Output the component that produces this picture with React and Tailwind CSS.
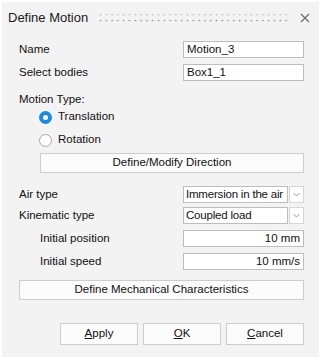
import React from 'react';

const font = { fontFamily: '"Liberation Sans", Arial, sans-serif' };

const Field = ({ value, right }) => (
  <div
    className={`w-[121px] h-[17px] border border-[#bdbdbd] bg-white text-[11.5px] leading-[15px] px-[3px] text-[#111] ${
      right ? 'text-right' : 'text-left'
    }`}
  >
    {value}
  </div>
);

const Select = ({ value }) => (
  <div className="flex w-[121px] h-[17px] gap-[1px]">
    <div className="flex-1 border border-[#bdbdbd] bg-white text-[11.5px] leading-[15px] pl-[2px] tracking-[-0.2px] text-[#111] whitespace-nowrap overflow-hidden">
      {value}
    </div>
    <div className="w-[15px] shrink-0 border border-[#d6d6d6] bg-white flex items-center justify-center">
      <svg width="7" height="5" viewBox="0 0 7 5">
        <path d="M0.5 1 L3.5 4 L6.5 1" fill="none" stroke="#9a9a9a" strokeWidth="1" />
      </svg>
    </div>
  </div>
);

const Row = ({ label, indent, children, className = '' }) => (
  <div className={`flex items-center justify-between ${className}`}>
    <span className={`text-[11.5px] text-[#111] whitespace-nowrap ${indent ? 'pl-[21px]' : ''}`}>{label}</span>
    {children}
  </div>
);

const Radio = ({ checked, label }) => (
  <div className="flex items-center h-[23px] pl-[20px] gap-[6px]">
    {checked ? (
      <span className="w-[13px] h-[13px] rounded-full bg-[#1b8be0] flex items-center justify-center">
        <span className="w-[5px] h-[5px] rounded-full bg-white" />
      </span>
    ) : (
      <span className="w-[13px] h-[13px] rounded-full border border-[#a8a8a8] bg-white" />
    )}
    <span className="text-[11.5px] text-[#111]">{label}</span>
  </div>
);

const Button = ({ children, className = '' }) => (
  <div
    className={`border border-[#cdcdcd] bg-[#fbfbfb] flex items-center justify-center text-[11.5px] text-[#111] whitespace-nowrap ${className}`}
  >
    {children}
  </div>
);

export default function App() {
  return (
    <div className="w-[326px] h-[357px] bg-white pt-[2px] pl-[2px]" style={font}>
      <div className="w-[317px] h-[355px] bg-[#f3f3f3] flex flex-col">
        {/* Title bar */}
        <div className="h-[31px] flex items-center pl-[6px] pr-[9px]">
          <span className="text-[13px] text-[#1a1a1a] whitespace-nowrap shrink-0">Define Motion</span>
          <svg className="ml-[11px] shrink-0" width="192" height="10" viewBox="0 0 192 10">
            <defs>
              <pattern id="grip" width="5.8" height="6" patternUnits="userSpaceOnUse">
                <circle cx="1.5" cy="1.5" r="0.85" fill="#8f8f8f" />
              </pattern>
            </defs>
            <rect x="0" y="1.5" width="192" height="8" fill="url(#grip)" />
          </svg>
          <svg className="ml-auto shrink-0" width="10" height="10" viewBox="0 0 10 10">
            <path d="M1 1 L9 9 M9 1 L1 9" stroke="#6a6a6a" strokeWidth="1.1" />
          </svg>
        </div>

        <div className="flex flex-col pl-[17px] pr-[15px]">
          <Row label="Name" className="mt-[8px]">
            <Field value="Motion_3" />
          </Row>
          <Row label="Select bodies" className="mt-[6px]">
            <Field value="Box1_1" />
          </Row>

          <div className="mt-[10px] text-[11.5px] text-[#111] leading-[14px]">Motion Type:</div>
          <Radio checked label="Translation" />
          <Radio label="Rotation" />
          <Button className="ml-[21px] h-[20px] mt-[1px]">Define/Modify Direction</Button>

          <Row label="Air type" className="mt-[13px]">
            <Select value="Immersion in the air" />
          </Row>
          <Row label="Kinematic type" className="mt-[4px]">
            <Select value="Coupled load" />
          </Row>
          <Row label="Initial position" indent className="mt-[6px]">
            <Field value="10 mm" right />
          </Row>
          <Row label="Initial speed" indent className="mt-[6px]">
            <Field value="10 mm/s" right />
          </Row>

          <Button className="h-[20px] mt-[9px]">Define Mechanical Characteristics</Button>

          <div className="flex justify-end gap-[5px] mt-[23px]">
            <Button className="w-[78px] h-[22px]">
              <span><u>A</u>pply</span>
            </Button>
            <Button className="w-[78px] h-[22px]">
              <span><u>O</u>K</span>
            </Button>
            <Button className="w-[78px] h-[22px]">
              <span><u>C</u>ancel</span>
            </Button>
          </div>
        </div>
      </div>
    </div>
  );
}
